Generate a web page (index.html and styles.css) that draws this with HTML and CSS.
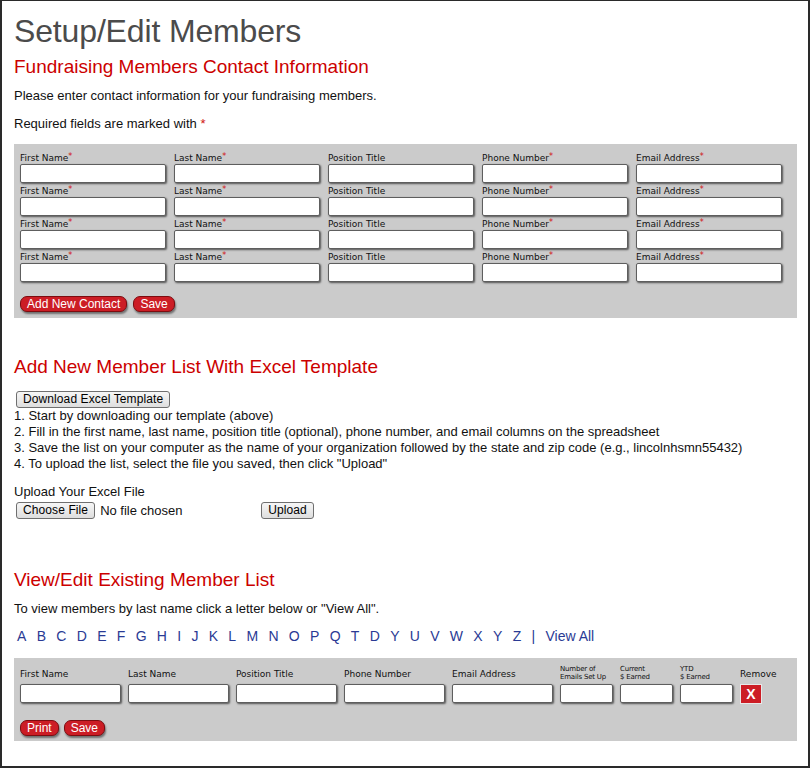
FILE: index.html
```html
<!DOCTYPE html>
<html>
<head>
<meta charset="utf-8">
<title>Setup/Edit Members</title>
<link rel="stylesheet" href="styles.css">
</head>
<body>
<div class="page">
  <h1 class="title">Setup/Edit Members</h1>

  <h2 class="section-title">Fundraising Members Contact Information</h2>
  <p class="intro">Please enter contact information for your fundraising members.</p>
  <p class="intro intro-req">Required fields are marked with <span class="star">*</span></p>

  <div class="panel contacts">
    <div class="contact-grid">
      <div class="field"><label>First Name<span class="req">*</span></label><input type="text"></div>
      <div class="field"><label>Last Name<span class="req">*</span></label><input type="text"></div>
      <div class="field"><label>Position Title</label><input type="text"></div>
      <div class="field"><label>Phone Number<span class="req">*</span></label><input type="text"></div>
      <div class="field"><label>Email Address<span class="req">*</span></label><input type="text"></div>

      <div class="field"><label>First Name<span class="req">*</span></label><input type="text"></div>
      <div class="field"><label>Last Name<span class="req">*</span></label><input type="text"></div>
      <div class="field"><label>Position Title</label><input type="text"></div>
      <div class="field"><label>Phone Number<span class="req">*</span></label><input type="text"></div>
      <div class="field"><label>Email Address<span class="req">*</span></label><input type="text"></div>

      <div class="field"><label>First Name<span class="req">*</span></label><input type="text"></div>
      <div class="field"><label>Last Name<span class="req">*</span></label><input type="text"></div>
      <div class="field"><label>Position Title</label><input type="text"></div>
      <div class="field"><label>Phone Number<span class="req">*</span></label><input type="text"></div>
      <div class="field"><label>Email Address<span class="req">*</span></label><input type="text"></div>

      <div class="field"><label>First Name<span class="req">*</span></label><input type="text"></div>
      <div class="field"><label>Last Name<span class="req">*</span></label><input type="text"></div>
      <div class="field"><label>Position Title</label><input type="text"></div>
      <div class="field"><label>Phone Number<span class="req">*</span></label><input type="text"></div>
      <div class="field"><label>Email Address<span class="req">*</span></label><input type="text"></div>
    </div>
    <div class="actions">
      <button class="red-btn">Add New Contact</button>
      <button class="red-btn">Save</button>
    </div>
  </div>

  <h2 class="section-title excel-title">Add New Member List With Excel Template</h2>
  <div class="excel">
    <div class="download-row"><button class="sys-btn">Download Excel Template</button></div>
    <div class="steps">
      <div>1. Start by downloading our template (above)</div>
      <div>2. Fill in the first name, last name, position title (optional), phone number, and email columns on the spreadsheet</div>
      <div>3. Save the list on your computer as the name of your organization followed by the state and zip code (e.g., lincolnhsmn55432)</div>
      <div>4. To upload the list, select the file you saved, then click "Upload"</div>
    </div>
    <div class="upload-label">Upload Your Excel File</div>
    <div class="upload-row">
      <button class="sys-btn">Choose File</button>
      <span class="nofile">No file chosen</span>
      <button class="sys-btn upload-btn">Upload</button>
    </div>
  </div>

  <h2 class="section-title list-title">View/Edit Existing Member List</h2>
  <p class="intro">To view members by last name click a letter below or "View All".</p>
  <nav class="letters">
    <a href="#">A</a><a href="#">B</a><a href="#">C</a><a href="#">D</a><a href="#">E</a><a href="#">F</a><a href="#">G</a><a href="#">H</a><a href="#">I</a><a href="#">J</a><a href="#">K</a><a href="#">L</a><a href="#">M</a><a href="#">N</a><a href="#">O</a><a href="#">P</a><a href="#">Q</a><a href="#">T</a><a href="#">D</a><a href="#">Y</a><a href="#">U</a><a href="#">V</a><a href="#">W</a><a href="#">X</a><a href="#">Y</a><a href="#">Z</a><span class="sep">|</span><a href="#">View All</a>
  </nav>

  <div class="panel members">
    <div class="member-row">
      <div class="mcol wide"><div class="mlabel">First Name</div><input type="text"></div>
      <div class="mcol wide"><div class="mlabel">Last Name</div><input type="text"></div>
      <div class="mcol wide"><div class="mlabel">Position Title</div><input type="text"></div>
      <div class="mcol wide"><div class="mlabel">Phone Number</div><input type="text"></div>
      <div class="mcol wide"><div class="mlabel">Email Address</div><input type="text"></div>
      <div class="mcol narrow"><div class="mlabel small">Number of<br>Emails Set Up</div><input type="text"></div>
      <div class="mcol narrow"><div class="mlabel small">Current<br>$ Earned</div><input type="text"></div>
      <div class="mcol narrow"><div class="mlabel small">YTD<br>$ Earned</div><input type="text"></div>
      <div class="mcol"><div class="mlabel">Remove</div><button class="remove-btn">X</button></div>
    </div>
    <div class="actions member-actions">
      <button class="red-btn">Print</button>
      <button class="red-btn">Save</button>
    </div>
  </div>
</div>
</body>
</html>
```

FILE: styles.css
```css
* { box-sizing: border-box; }

html, body {
  margin: 0;
  padding: 0;
  background: #ffffff;
}

body {
  font-family: "Liberation Sans", Arial, sans-serif;
  color: #111111;
}

.page {
  width: 810px;
  height: 768px;
  border-style: solid;
  border-color: #2a2a2a;
  border-width: 1px 2px 2px 2px;
  padding: 14px 0 0 12px;
  overflow: hidden;
}

.title {
  margin: 0;
  font-size: 32px;
  line-height: 32px;
  font-weight: normal;
  color: #4b4b4b;
  letter-spacing: -0.15px;
}

.section-title {
  margin: 9px 0 0 0;
  font-size: 19px;
  line-height: 22px;
  font-weight: normal;
  color: #cc0000;
}

.intro {
  margin: 10px 0 0 0;
  font-size: 13px;
  line-height: 15px;
}

.intro-req {
  margin-top: 13px;
}

.star, .req {
  color: #d01010;
}

.req {
  font-size: 8px;
  line-height: 0;
  vertical-align: 2px;
}

.panel {
  background: #cbcbcb;
  width: 783px;
}

.contacts {
  margin-top: 13px;
  padding: 7px 0 6px 6px;
}

.contact-grid {
  display: grid;
  grid-template-columns: repeat(5, 146px);
  column-gap: 8px;
}

.field {
  display: flex;
  flex-direction: column;
  height: 33px;
}

.field label {
  display: block;
  height: 13px;
  line-height: 15px;
}

.field label, .mlabel {
  font-family: "DejaVu Sans", Verdana, sans-serif;
  font-size: 9px;
  color: #111111;
}

input[type="text"] {
  display: block;
  height: 19px;
  margin: 0;
  padding: 0 3px;
  background: #ffffff;
  border: 1px solid #5e5e5e;
  border-radius: 2px;
  box-shadow: 1px 1px 2px rgba(0, 0, 0, 0.6);
  font-size: 12px;
}

.field input[type="text"] {
  width: 146px;
}

.actions {
  display: flex;
  gap: 6px;
  margin-top: 13px;
}

.red-btn {
  height: 16px;
  margin: 0;
  padding: 0 6px;
  background: #cc1d25;
  border: 1px solid #7d0c10;
  border-radius: 7px;
  box-shadow: 1px 2px 2px rgba(0, 0, 0, 0.45);
  color: #ffffff;
  font-family: "Liberation Sans", Arial, sans-serif;
  font-size: 12px;
  line-height: 14px;
}

.excel-title {
  margin-top: 38px;
}

.download-row {
  margin-top: 11px;
  height: 18px;
}

.sys-btn {
  height: 17px;
  margin: 0 0 0 2px;
  padding: 0 6px;
  background: linear-gradient(#f6f6f6, #dedede);
  border: 1px solid #6f6f6f;
  border-radius: 3px;
  color: #000000;
  font-family: "Liberation Sans", Arial, sans-serif;
  font-size: 12px;
  line-height: 15px;
  letter-spacing: 0.1px;
}

.steps {
  padding-top: 1px;
}

.steps, .upload-label, .nofile {
  font-size: 13px;
  line-height: 16px;
}

.upload-label {
  margin-top: 12px;
}

.upload-row {
  display: flex;
  align-items: center;
  margin-top: 2px;
}

.nofile {
  margin-left: 5px;
  width: 159px;
}

.list-title {
  margin-top: 50px;
}

.letters {
  display: flex;
  gap: 10.3px;
  margin: 12px 0 0 3px;
  font-size: 14px;
  line-height: 16px;
}

.letters a {
  color: #2a3a94;
  text-decoration: none;
}

.letters .sep {
  color: #2a3a94;
}

.members {
  margin-top: 14px;
  padding: 6px 0 5px 6px;
}

.member-row {
  display: flex;
  gap: 7px;
}

.mcol {
  display: flex;
  flex-direction: column;
}

.mcol .mlabel {
  height: 20px;
  display: flex;
  align-items: flex-end;
  padding-bottom: 4px;
  line-height: 11px;
}

.mcol .mlabel.small {
  font-size: 7px;
  line-height: 8px;
  letter-spacing: -0.2px;
  padding-bottom: 4px;
  display: block;
  padding-top: 1px;
}

.wide input[type="text"] {
  width: 101px;
}

.narrow input[type="text"] {
  width: 53px;
}

.remove-btn {
  width: 22px;
  height: 20px;
  margin: 0;
  padding: 0;
  background: #cc1d25;
  border: 1px solid #e8e8e8;
  color: #ffffff;
  font-family: "Liberation Sans", Arial, sans-serif;
  font-size: 14px;
  font-weight: bold;
  line-height: 18px;
}

.member-actions {
  margin-top: 16px;
  gap: 5px;
}
```
